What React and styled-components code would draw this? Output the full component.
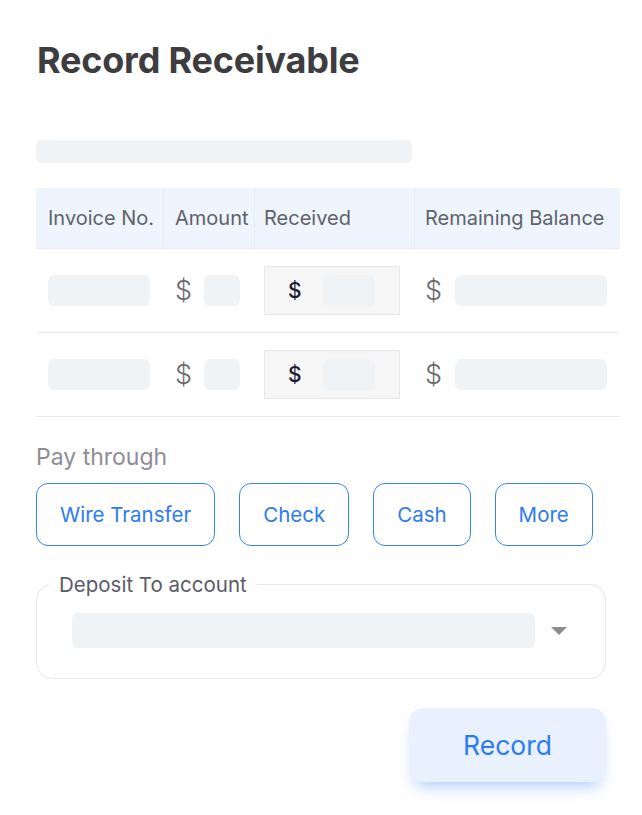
import React from 'react';
import styled, { createGlobalStyle } from 'styled-components';

const GlobalStyle = createGlobalStyle`
  body {
    margin: 0;
    background: #fff;
    font-family: Inter, "Noto Sans", sans-serif;
  }
`;

const Page = styled.div`
  width: 642px;
  padding: 37px 22px 30px 36px;
  box-sizing: border-box;
`;

const Title = styled.h1`
  margin: 0 0 0 1px;
  font-size: 36px;
  line-height: 46px;
  font-weight: 700;
  color: #3d3d3f;
  letter-spacing: -0.2px;
`;

const Skeleton = styled.div`
  background: #f0f3f6;
  border-radius: ${(p) => p.$radius || 6}px;
  width: ${(p) => (p.$w ? `${p.$w}px` : 'auto')};
  height: ${(p) => p.$h || 31}px;
  flex: ${(p) => (p.$grow ? 1 : 'none')};
`;

const TopBar = styled(Skeleton)`
  margin-top: 57px;
`;

const Table = styled.div`
  margin-top: 25px;
  width: 584px;
  display: grid;
  grid-template-columns: 127px 91px 160px 206px;
`;

const HeadCell = styled.div`
  height: 60px;
  background: #eff5fe;
  display: flex;
  align-items: center;
  padding-left: ${(p) => p.$pad || 11}px;
  font-size: 20px;
  color: #606268;
  white-space: nowrap;
  overflow: hidden;
  border-left: ${(p) => (p.$first ? 'none' : '1px solid #e6edf6')};
  border-bottom: 1px solid #e8ecf1;
`;

const Cell = styled.div`
  height: 83px;
  display: flex;
  align-items: center;
  gap: ${(p) => p.$gap || 0}px;
  padding-left: ${(p) => p.$pad || 12}px;
  padding-right: ${(p) => p.$padR || 0}px;
  border-bottom: 1px solid #e8eaed;
`;

const Dollar = styled.span`
  font-size: 27px;
  color: #6a6a6e;
  font-weight: 300;
  width: 16px;
`;

const ReceivedBox = styled.div`
  width: 136px;
  height: 49px;
  box-sizing: border-box;
  background: #f6f6f7;
  border: 1px solid #e6e6e8;
  border-radius: 2px;
  display: flex;
  align-items: center;
  padding-left: 23px;
  gap: 22px;
`;

const DarkDollar = styled.span`
  font-size: 21px;
  color: #1a1c33;
  font-weight: 500;
  width: 13px;
`;

const SectionLabel = styled.div`
  margin-top: 26px;
  font-size: 23px;
  color: #8d8c98;
  line-height: 28px;
`;

const Methods = styled.div`
  margin-top: 12px;
  display: flex;
  gap: 24px;
`;

const MethodButton = styled.button`
  height: 63px;
  padding: 0 ${(p) => p.$padX || 23}px;
  border: 1.5px solid #3583f2;
  border-radius: 12px;
  background: #fff;
  color: #2d7bf0;
  font-family: inherit;
  font-size: 20.5px;
`;

const Fieldset = styled.fieldset`
  margin: 26px 0 0 0;
  width: 570px;
  box-sizing: border-box;
  border: 1px solid #e6e6e8;
  border-radius: 16px;
  padding: 16px 38px 30px 35px;
  display: flex;
  align-items: center;
  gap: 16px;
`;

const Legend = styled.legend`
  margin-left: -23px;
  padding: 0 10px;
  font-size: 20.5px;
  line-height: 25px;
  color: #5b5a68;
`;

const Caret = styled.span`
  width: 0;
  height: 0;
  border-left: 8px solid transparent;
  border-right: 8px solid transparent;
  border-top: 8px solid #8d8d8f;
`;

const Footer = styled.div`
  width: 570px;
  display: flex;
  justify-content: flex-end;
  margin-top: 29px;
`;

const RecordButton = styled.button`
  width: 197px;
  height: 74px;
  border: none;
  border-radius: 14px;
  background: #e9f1fe;
  color: #2d7bf0;
  font-family: inherit;
  font-size: 26.5px;
  box-shadow: 0 10px 16px -6px rgba(70, 140, 250, 0.45);
`;

const rows = [0, 1];

export default function App() {
  return (
    <>
      <GlobalStyle />
      <Page>
        <Title>Record Receivable</Title>
        <TopBar $w={376} $h={23} />
        <Table>
          <HeadCell $first $pad={12}>Invoice No.</HeadCell>
          <HeadCell>Amount</HeadCell>
          <HeadCell $pad={9}>Received</HeadCell>
          <HeadCell $pad={10}>Remaining Balance</HeadCell>
          {rows.map((r) => (
            <React.Fragment key={r}>
              <Cell>
                <Skeleton $w={102} />
              </Cell>
              <Cell $gap={13}>
                <Dollar>$</Dollar>
                <Skeleton $w={36} />
              </Cell>
              <Cell $pad={10}>
                <ReceivedBox>
                  <DarkDollar>$</DarkDollar>
                  <Skeleton $w={52} />
                </ReceivedBox>
              </Cell>
              <Cell $pad={11} $gap={14} $padR={13}>
                <Dollar>$</Dollar>
                <Skeleton $grow />
              </Cell>
            </React.Fragment>
          ))}
        </Table>
        <SectionLabel>Pay through</SectionLabel>
        <Methods>
          <MethodButton>Wire Transfer</MethodButton>
          <MethodButton>Check</MethodButton>
          <MethodButton>Cash</MethodButton>
          <MethodButton>More</MethodButton>
        </Methods>
        <Fieldset>
          <Legend>Deposit To account</Legend>
          <Skeleton $grow $h={35} />
          <Caret />
        </Fieldset>
        <Footer>
          <RecordButton>Record</RecordButton>
        </Footer>
      </Page>
    </>
  );
}
